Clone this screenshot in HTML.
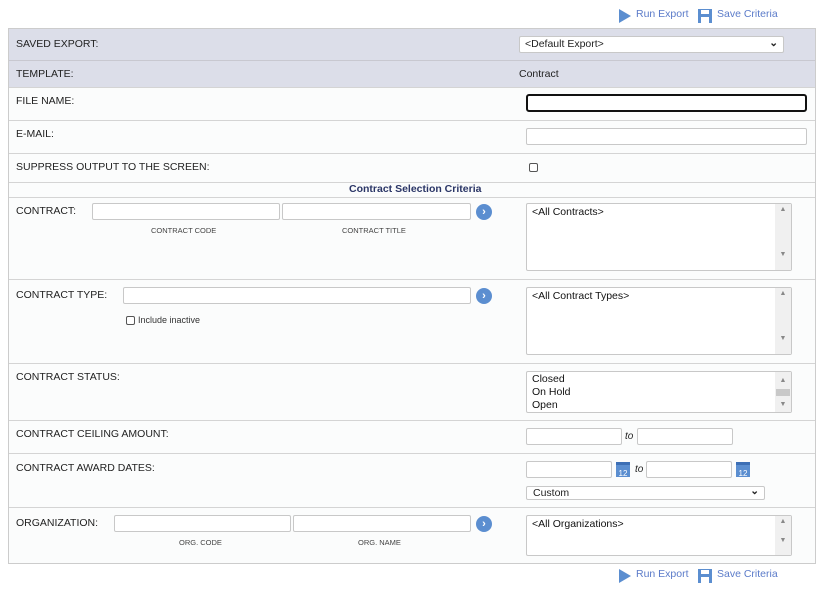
<!DOCTYPE html>
<html><head><style>
*{box-sizing:border-box;margin:0;padding:0}
body{width:825px;height:590px;background:#fff;font-family:"Liberation Sans",Arial,sans-serif;font-size:10.5px;color:#222;position:relative;overflow:hidden}
.a{position:absolute}
.box{position:absolute;left:8px;top:28px;width:808px;height:536px;border:1px solid #ccc;background:#fbfcfc}
.hl{position:absolute;left:9px;width:806px;height:1px;background:#d4d4d4}
.lbl{position:absolute;left:16px;font-size:10.5px;color:#222}
.in{position:absolute;height:17px;border:1px solid #c8c8c8;border-radius:2px;background:#fff}
.sm{position:absolute;font-size:7.5px;color:#444}
.go{position:absolute;width:16px;height:16px;border-radius:50%;background:#5b8ed0;color:#fff;font-size:11px;line-height:16px;text-align:center;font-weight:bold}
.lb{position:absolute;border:1px solid #c8c8c8;border-radius:2px;background:#fff;font-size:10.5px;padding:2px 5px;color:#111}
.sb{position:absolute;right:0;top:0;bottom:0;width:16px;background:#f0f0f0;color:#888;font-size:7px;text-align:center}
.lnk{position:absolute;color:#5b7bc9;font-size:10.5px}
.cal{position:absolute;width:14px;height:15px;background:#5b8ed0;color:#fff;font-size:8px;text-align:center;line-height:17px;border-top:3px solid #3d6fb5}
</style></head><body>
<svg class="a" style="left:618px;top:9px" width="14" height="14"><path d="M1 0 L13 7 L1 14Z" fill="#5b8ed0"/></svg>
<div class="lnk" style="left:636px;top:8px">Run Export</div>
<svg class="a" style="left:698px;top:9px" width="14" height="14"><rect width="14" height="14" fill="#5b8ed0"/><rect x="3" y="1" width="8" height="4" fill="#fff"/><rect x="3" y="8" width="8" height="6" fill="#fff"/></svg>
<div class="lnk" style="left:717px;top:8px">Save Criteria</div>

<div class="box"></div>
<div class="a" style="left:9px;top:29px;width:806px;height:58px;background:#dcdee9"></div>
<div class="hl" style="top:60px;background:#c8c8d0"></div>
<div class="hl" style="top:87px"></div>
<div class="hl" style="top:120px"></div>
<div class="hl" style="top:153px"></div>
<div class="hl" style="top:182px"></div>
<div class="hl" style="top:197px"></div>
<div class="hl" style="top:279px"></div>
<div class="hl" style="top:363px"></div>
<div class="hl" style="top:420px"></div>
<div class="hl" style="top:453px"></div>
<div class="hl" style="top:507px"></div>

<div class="lbl" style="top:38px">SAVED EXPORT:</div>
<div class="in" style="left:519px;top:36px;width:265px;height:17px;padding:1px 5px;font-size:10.5px">&lt;Default Export&gt;<span class="a" style="right:5px;top:0;font-weight:bold">&#8964;</span></div>
<div class="lbl" style="top:68px">TEMPLATE:</div>
<div class="a" style="left:519px;top:68px;font-size:10.5px">Contract</div>
<div class="lbl" style="top:95px">FILE NAME:</div>
<div class="in" style="left:526px;top:94px;width:281px;height:18px;border:2px solid #111;border-radius:3px"></div>
<div class="lbl" style="top:128px">E-MAIL:</div>
<div class="in" style="left:526px;top:128px;width:281px"></div>
<div class="lbl" style="top:161px">SUPPRESS OUTPUT TO THE SCREEN:</div>
<div class="a" style="left:529px;top:163px;width:9px;height:9px;border:1px solid #555;border-radius:2px;background:#fff"></div>
<div class="a" style="left:349px;top:183px;font-size:10.5px;font-weight:bold;color:#2a3566">Contract Selection Criteria</div>

<div class="lbl" style="top:205px">CONTRACT:</div>
<div class="in" style="left:92px;top:203px;width:188px"></div>
<div class="in" style="left:282px;top:203px;width:189px"></div>
<div class="go" style="left:476px;top:204px">›</div>
<div class="sm" style="left:151px;top:226px">CONTRACT CODE</div>
<div class="sm" style="left:342px;top:226px">CONTRACT TITLE</div>
<div class="lb" style="left:526px;top:203px;width:266px;height:68px">&lt;All Contracts&gt;<div class="sb"><div style="margin-top:2px">▲</div><div style="margin-top:38px">▼</div></div></div>

<div class="lbl" style="top:289px">CONTRACT TYPE:</div>
<div class="in" style="left:123px;top:287px;width:348px"></div>
<div class="go" style="left:476px;top:288px">›</div>
<div class="a" style="left:126px;top:316px;width:9px;height:9px;border:1px solid #555;border-radius:2px;background:#fff"></div>
<div class="a" style="left:138px;top:315px;font-size:9px;color:#333">Include inactive</div>
<div class="lb" style="left:526px;top:287px;width:266px;height:68px">&lt;All Contract Types&gt;<div class="sb"><div style="margin-top:2px">▲</div><div style="margin-top:38px">▼</div></div></div>

<div class="lbl" style="top:371px">CONTRACT STATUS:</div>
<div class="lb" style="left:526px;top:371px;width:266px;height:42px;line-height:13px;padding-top:1px">Closed<br>On Hold<br>Open<div class="sb"><div style="margin-top:2px">▲</div><div style="height:7px;background:#c8c8c8;margin:2px 1px"></div><div>▼</div></div></div>

<div class="lbl" style="top:428px">CONTRACT CEILING AMOUNT:</div>
<div class="in" style="left:526px;top:428px;width:96px"></div>
<div class="a" style="left:625px;top:431px;font-style:italic;font-size:10px">to</div>
<div class="in" style="left:637px;top:428px;width:96px"></div>

<div class="lbl" style="top:462px">CONTRACT AWARD DATES:</div>
<div class="in" style="left:526px;top:461px;width:86px"></div>
<div class="cal" style="left:616px;top:462px">12</div>
<div class="a" style="left:635px;top:464px;font-style:italic;font-size:10px">to</div>
<div class="in" style="left:646px;top:461px;width:86px"></div>
<div class="cal" style="left:736px;top:462px">12</div>
<div class="in" style="left:526px;top:486px;width:239px;height:14px;font-size:10.5px;padding:0 6px;line-height:12px">Custom<span class="a" style="right:5px;top:-2px;font-weight:bold">&#8964;</span></div>

<div class="lbl" style="top:517px">ORGANIZATION:</div>
<div class="in" style="left:114px;top:515px;width:177px"></div>
<div class="in" style="left:293px;top:515px;width:178px"></div>
<div class="go" style="left:476px;top:516px">›</div>
<div class="sm" style="left:179px;top:538px">ORG. CODE</div>
<div class="sm" style="left:358px;top:538px">ORG. NAME</div>
<div class="lb" style="left:526px;top:515px;width:266px;height:41px">&lt;All Organizations&gt;<div class="sb"><div style="margin-top:2px">▲</div><div style="margin-top:12px">▼</div></div></div>

<svg class="a" style="left:618px;top:569px" width="14" height="14"><path d="M1 0 L13 7 L1 14Z" fill="#5b8ed0"/></svg>
<div class="lnk" style="left:636px;top:568px">Run Export</div>
<svg class="a" style="left:698px;top:569px" width="14" height="14"><rect width="14" height="14" fill="#5b8ed0"/><rect x="3" y="1" width="8" height="4" fill="#fff"/><rect x="3" y="8" width="8" height="6" fill="#fff"/></svg>
<div class="lnk" style="left:717px;top:568px">Save Criteria</div>
</body></html>
